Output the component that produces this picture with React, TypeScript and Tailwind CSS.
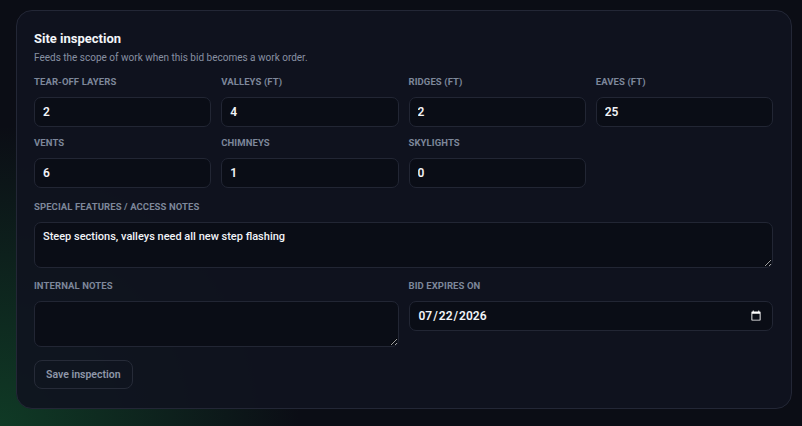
import { FC, ReactNode } from 'react';

const inputClass =
  'w-full h-[30px] rounded-[7px] border border-[#222634] bg-[#0a0d16] px-2 text-[12px] font-semibold text-[#f1f3f7] outline-none';

const areaClass =
  'block w-full h-[46px] rounded-[7px] border border-[#222634] bg-[#0a0d16] px-2 py-1.5 text-[11px] font-medium leading-4 text-[#f1f3f7] outline-none';

const Field: FC<{ label: string; children: ReactNode }> = ({ label, children }) => (
  <div className="flex flex-col">
    <label className="mb-2 text-[9.5px] font-bold uppercase leading-[15px] tracking-[0.01em] text-[#7d879a]">
      {label}
    </label>
    {children}
  </div>
);

const measurements = [
  { label: 'Tear-off layers', value: '2' },
  { label: 'Valleys (ft)', value: '4' },
  { label: 'Ridges (ft)', value: '2' },
  { label: 'Eaves (ft)', value: '25' },
  { label: 'Vents', value: '6' },
  { label: 'Chimneys', value: '1' },
  { label: 'Skylights', value: '0' },
];

const App: FC = () => {
  return (
    <div className="min-h-[426px] w-full bg-[#0b0d15] bg-[radial-gradient(ellipse_300px_300px_at_0%_100%,rgba(22,120,60,0.42),rgba(11,13,21,0)_100%)] pl-4 pr-[10px] pt-[10px] font-['Roboto',sans-serif]">
      <div className="rounded-2xl border border-[#232736] bg-[#10131f]/90 px-[18px] pl-[17px] pt-[19px] pb-[19px]">
        <h2 className="text-[13px] font-bold leading-[18px] text-[#f3f5f9]">Site inspection</h2>
        <p className="mt-[2px] text-[10px] leading-4 text-[#8790a2]">
          Feeds the scope of work when this bid becomes a work order.
        </p>

        <div className="mt-2 grid grid-cols-4 gap-x-[10px] gap-y-2">
          {measurements.map((m) => (
            <Field key={m.label} label={m.label}>
              <input type="number" defaultValue={m.value} className={inputClass} />
            </Field>
          ))}
        </div>

        <div className="mt-[11px]">
          <Field label="Special features / access notes">
            <textarea
              rows={2}
              defaultValue="Steep sections, valleys need all new step flashing"
              className={areaClass}
            />
          </Field>
        </div>

        <div className="mt-[10px] grid grid-cols-2 gap-x-[10px]">
          <Field label="Internal notes">
            <textarea rows={2} className={areaClass} />
          </Field>
          <Field label="Bid expires on">
            <input
              type="date"
              defaultValue="2026-07-22"
              className={`${inputClass} text-[11px] [color-scheme:dark]`}
            />
          </Field>
        </div>

        <button className="mt-[13px] h-[29px] rounded-lg border border-[#262b38] bg-transparent px-[11px] text-[10.5px] font-semibold text-[#8e97a8]">
          Save inspection
        </button>
      </div>
    </div>
  );
};

export default App;
